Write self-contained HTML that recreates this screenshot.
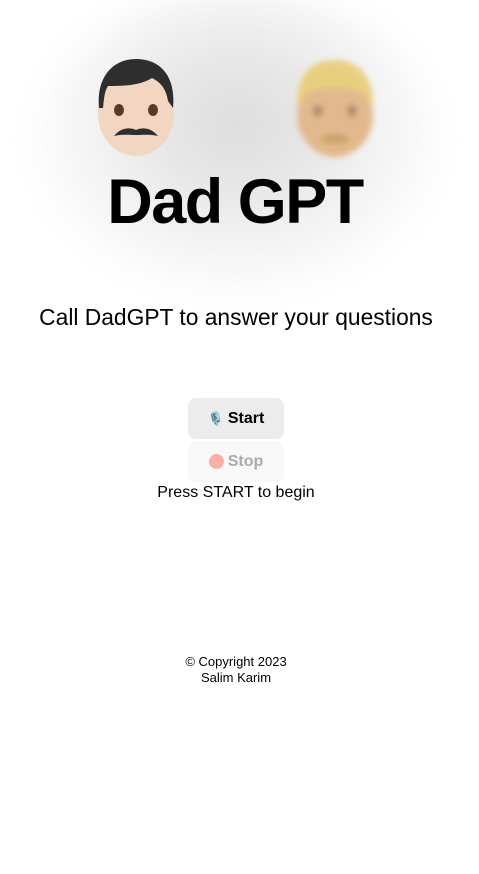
<!DOCTYPE html>
<html><head><style>
body{margin:0;width:479px;height:874px;background:#fff;font-family:"Liberation Sans",sans-serif;position:relative;overflow:hidden}
.blob{position:absolute;left:37px;top:-10px;width:400px;height:300px;border-radius:50%;background:radial-gradient(ellipse at 50% 45%,#dedcdc 0%,#e9e8e8 30%,#f5f5f5 55%,#fcfcfc 75%,#fff 90%);filter:blur(14px)}
.face{position:absolute}
h1{position:absolute;left:0;width:470px;top:166px;margin:0;text-align:center;font-size:63px;font-weight:bold;letter-spacing:-1.5px;color:#000}
.sub{position:absolute;left:0;width:472px;top:304px;text-align:center;font-size:22.8px;color:#000}
.btn{position:absolute;left:188px;width:96px;height:41px;border-radius:8px;font-size:16px;font-weight:bold;display:flex;align-items:center;justify-content:center}
.t{position:absolute;left:0;width:472px;text-align:center;color:#000}
</style></head><body>
<div class="blob"></div>
<svg class="face" style="left:94px;top:56px" width="84" height="102" viewBox="0 0 84 102">
<ellipse cx="42" cy="58" rx="38" ry="42" fill="#f3d6c2"/>
<path d="M5 52 C2 20 20 2 44 3 C68 4 82 22 79 52 L74 45 C72 32 66 26 58 22 C45 30 28 30 14 30 C10 36 10 44 9 52Z" fill="#2e2e2e"/>
<ellipse cx="25" cy="54" rx="5" ry="6" fill="#5a3a22"/><ellipse cx="59" cy="54" rx="5" ry="6" fill="#5a3a22"/>
<path d="M20 80 C28 70 38 72 42 74 C46 72 56 70 64 80 C56 78 48 79 42 79 C36 79 28 78 20 80Z" fill="#2e2e2e"/>
</svg>
<svg class="face" style="left:290px;top:55px;filter:blur(3px)" width="90" height="105" viewBox="0 0 90 105">
<ellipse cx="45" cy="60" rx="38" ry="42" fill="#e2b98d"/>
<path d="M8 55 C4 20 22 4 46 5 C70 6 86 24 82 55 L76 40 C60 30 30 30 14 40Z" fill="#e8cf80"/>
<ellipse cx="28" cy="56" rx="5" ry="6" fill="#b09070"/><ellipse cx="62" cy="56" rx="5" ry="6" fill="#b09070"/>
<ellipse cx="45" cy="84" rx="14" ry="5" fill="#caa26a"/>
</svg>
<h1>Dad GPT</h1>
<div class="sub">Call DadGPT to answer your questions</div>
<div class="btn" style="top:398px;background:#ececec;color:#000"><span style="font-size:13px;margin-right:4px">🎙️</span>Start</div>
<div class="btn" style="top:441px;background:#f8f8f8;color:#aaa;font-weight:normal"><span style="display:inline-block;width:15px;height:15px;border-radius:50%;background:#f6b0a4;margin-right:4px"></span><b>Stop</b></div>
<div class="t" style="top:484px;font-size:16px">Press START to begin</div>
<div class="t" style="top:654px;font-size:13px;line-height:16px">© Copyright 2023<br>Salim Karim</div>
</body></html>
